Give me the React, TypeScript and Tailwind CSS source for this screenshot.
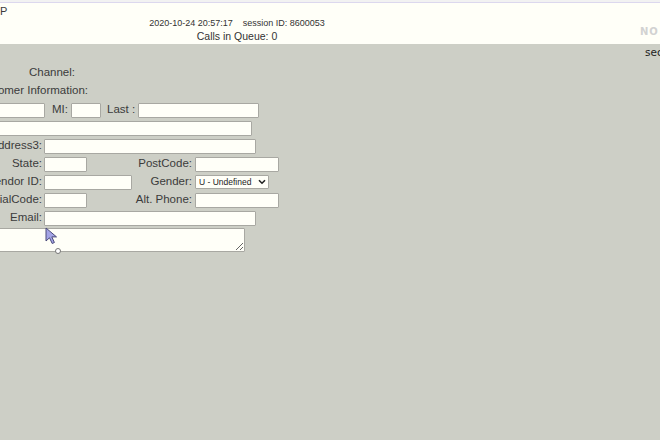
import React from 'react';

const inputCls =
  'h-[15px] border border-[#a8a8a2] bg-[#fffff8] rounded-[1px] outline-none px-[2px] text-[10px]';

const Field = ({w, className = ''}: {w: string; className?: string}) => (
  <input type="text" className={`${inputCls} ${w} ${className}`} />
);

const Row = ({label, children}: {label: string; children: React.ReactNode}) => (
  <div className="flex h-[18px] items-center">
    <div className="w-[102px] shrink-0 text-right pr-[2px]">{label}</div>
    <div className="flex items-center">{children}</div>
  </div>
);

const Pair = ({
  label,
  w,
  right,
  rightW,
  children,
}: {
  label: string;
  w: string;
  right: string;
  rightW?: string;
  children?: React.ReactNode;
}) => (
  <div className="flex h-[18px] items-center">
    <div className="w-[102px] shrink-0 text-right pr-[2px]">{label}</div>
    <div className="w-[86px] shrink-0 flex items-center">
      <Field w={w} />
    </div>
    <div className="w-[65px] shrink-0 text-right pr-[3px]">{right}</div>
    {children ?? <Field w={rightW ?? 'w-[84px]'} />}
  </div>
);

const Cursor = () => (
  <svg
    className="absolute left-[45px] top-[227px]"
    width="13"
    height="18"
    viewBox="0 0 13 18"
  >
    <path
      d="M1 1 L1 14 L4.5 10.8 L7.2 16.5 L9.4 15.5 L6.8 9.9 L11.5 9.9 Z"
      fill="#a4a4e6"
      stroke="#4a4a7a"
      strokeWidth="1"
      strokeLinejoin="round"
    />
  </svg>
);

export default function App() {
  return (
    <div className="relative w-[660px] h-[440px] overflow-hidden bg-[#cdcfc6] text-[#3b3b3b] font-['Liberation_Sans',Arial,sans-serif] text-[11.5px] leading-none">
      <div className="pt-[2px] bg-[#f2f2f2]">
        <div className="h-[42px] border-t border-[#dcd8ee] bg-[#fffff8] flex">
          <div className="w-[474px] relative text-center">
            <div className="absolute left-0 top-[3px] text-[11px]">P</div>
            <div className="pt-[16px] text-[9px] text-[#333]">
              2020-10-24 20:57:17 &nbsp;&nbsp; session ID: 8600053
            </div>
            <div className="pt-[3px] text-[10.5px] text-[#333]">Calls in Queue: 0</div>
          </div>
          <div className="flex-1 flex justify-end items-start pt-[24px]">
            <span className="font-['DejaVu_Sans',sans-serif] font-bold text-[10px] text-[#d2d2d2] tracking-[1px] -mr-[2px] w-[22px]">
              NO
            </span>
          </div>
        </div>
      </div>

      <div className="h-[20px] flex justify-end pt-[3px]">
        <span className="font-['DejaVu_Sans',sans-serif] text-[10.5px] text-[#222] -mr-[3px] w-[18px]">
          sec
        </span>
      </div>

      <div className="-ml-[58px]">
        <div className="h-[17px] flex items-center">
          <div className="w-[133px] text-right">Channel:</div>
        </div>
        <div className="h-[20px] flex items-center">
          <div className="w-[146px] text-right">Customer Information:</div>
        </div>

        <div className="flex h-[18px] items-center">
          <Field w="w-[70px]" className="ml-[33px]" />
          <span className="ml-[7px]">MI:</span>
          <Field w="w-[30px]" className="ml-[3px]" />
          <span className="ml-[6px]">Last :</span>
          <Field w="w-[121px]" className="ml-[3px]" />
        </div>
        <div className="flex h-[18px] items-center">
          <Field w="w-[260px]" className="ml-[50px]" />
        </div>
        <Row label="Address3:">
          <Field w="w-[212px]" />
        </Row>
        <Pair label="State:" w="w-[43px]" right="PostCode:" />
        <Pair label="Vendor ID:" w="w-[88px]" right="Gender:">
          <div className="relative">
            <select className="appearance-none h-[14px] w-[74px] border border-[#a8a8a2] bg-[#fffff8] rounded-[1px] pl-[3px] text-[8.5px] text-[#222] leading-none outline-none">
              <option>U - Undefined</option>
            </select>
            <svg
              className="absolute right-[3px] top-[4px] pointer-events-none"
              width="8"
              height="6"
              viewBox="0 0 8 6"
            >
              <path d="M1 1.2 L4 4.2 L7 1.2" fill="none" stroke="#222" strokeWidth="1.6" />
            </svg>
          </div>
        </Pair>
        <Pair label="DialCode:" w="w-[43px]" right="Alt. Phone:" />
        <Row label="Email:">
          <Field w="w-[212px]" />
        </Row>
        <div className="flex pt-[1px]">
          <textarea className="ml-[50px] w-[253px] h-[24px] border border-[#a8a8a2] bg-[#fffff8] rounded-[1px] outline-none" />
        </div>
      </div>

      <Cursor />
      <div className="absolute left-[55px] top-[248px] w-[6px] h-[6px] rounded-full border border-[#777] bg-white" />
    </div>
  );
}
